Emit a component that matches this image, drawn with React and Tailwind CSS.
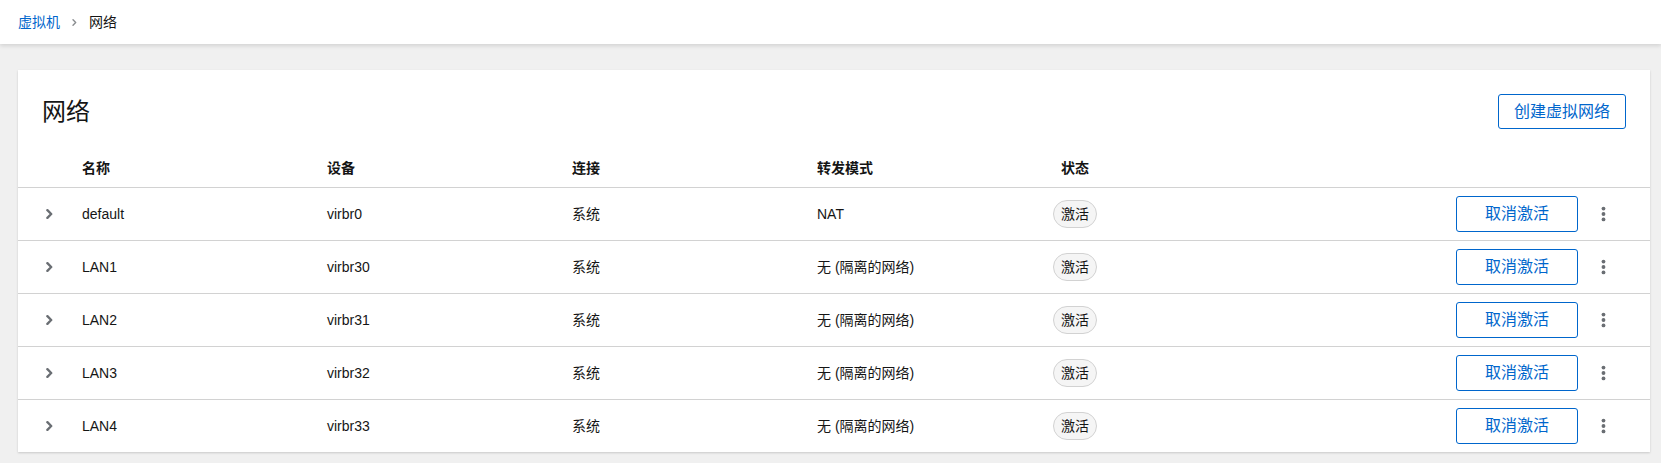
import React from 'react';

const networks = [
  { name: 'default', device: 'virbr0', conn: '系统', mode: 'NAT' },
  { name: 'LAN1', device: 'virbr30', conn: '系统', mode: '无 (隔离的网络)' },
  { name: 'LAN2', device: 'virbr31', conn: '系统', mode: '无 (隔离的网络)' },
  { name: 'LAN3', device: 'virbr32', conn: '系统', mode: '无 (隔离的网络)' },
  { name: 'LAN4', device: 'virbr33', conn: '系统', mode: '无 (隔离的网络)' },
];

const AngleRight = ({ className, width = 2.4 }) => (
  <svg viewBox="0 0 7 10" className={className} fill="none" stroke="currentColor">
    <polyline points="1.4,1.2 5.2,5 1.4,8.8" strokeWidth={width} strokeLinejoin="round" strokeLinecap="round" />
  </svg>
);

const Kebab = () => (
  <svg viewBox="0 0 6 18" className="w-[5px] h-[16px] text-[#6a6e73]" fill="currentColor">
    <circle cx="3" cy="2.5" r="2.3" />
    <circle cx="3" cy="9" r="2.3" />
    <circle cx="3" cy="15.5" r="2.3" />
  </svg>
);

const App = () => {
  return (
    <div
      className="min-h-[463px] bg-[#f0f0f0] text-[#151515] text-sm"
      style={{ fontFamily: '"Liberation Sans", "Noto Sans CJK SC", sans-serif' }}
    >
      {/* Breadcrumb */}
      <div className="h-[44px] bg-white flex items-center pl-[18px] shadow-[0_2px_4px_rgba(0,0,0,0.12)] relative">
        <span className="text-[#0066cc]">虚拟机</span>
        <AngleRight className="w-[5px] h-[7px] mx-3 text-[#8a8d90]" width={2} />
        <span>网络</span>
      </div>

      <div className="pt-[26px] pl-[18px] pr-[11px] pb-[11px]">
        <div className="bg-white shadow-[0_1px_2px_rgba(0,0,0,0.16)]">
          {/* Title */}
          <div className="flex items-center justify-between px-6 pt-6">
            <h1 className="text-2xl leading-[35px]">网络</h1>
            <button className="w-[128px] h-[35px] border border-[#0066cc] rounded-[3px] text-base text-[#0066cc]">
              创建虚拟网络
            </button>
          </div>

          {/* Column headers */}
          <div className="flex items-end h-[58px] pb-2 font-bold leading-[21px]">
            <div className="w-[64px]" />
            <div className="w-[245px]">名称</div>
            <div className="w-[245px]">设备</div>
            <div className="w-[245px]">连接</div>
            <div className="w-[236px]">转发模式</div>
            <div className="w-[44px] text-center">状态</div>
          </div>

          {/* Rows */}
          {networks.map((n) => (
            <div key={n.name} className="flex items-center h-[53px] border-t border-[#d2d2d2]">
              <div className="w-[64px] flex justify-center pr-[2px]">
                <AngleRight className="w-[7px] h-[10px] text-[#6a6e73]" />
              </div>
              <div className="w-[245px]">{n.name}</div>
              <div className="w-[245px]">{n.device}</div>
              <div className="w-[245px]">{n.conn}</div>
              <div className="w-[236px]">{n.mode}</div>
              <div className="w-[44px]">
                <span className="flex items-center justify-center h-[28px] rounded-full border border-[#d2d2d2] bg-[#f5f5f5]">
                  激活
                </span>
              </div>
              <div className="flex-1 flex justify-end items-center">
                <button className="w-[122px] h-[36px] border border-[#0066cc] rounded-[3px] text-base text-[#0066cc]">
                  取消激活
                </button>
                <div className="w-[50px] flex justify-center">
                  <Kebab />
                </div>
                <div className="w-[22px]" />
              </div>
            </div>
          ))}
        </div>
      </div>
    </div>
  );
};

export default App;
